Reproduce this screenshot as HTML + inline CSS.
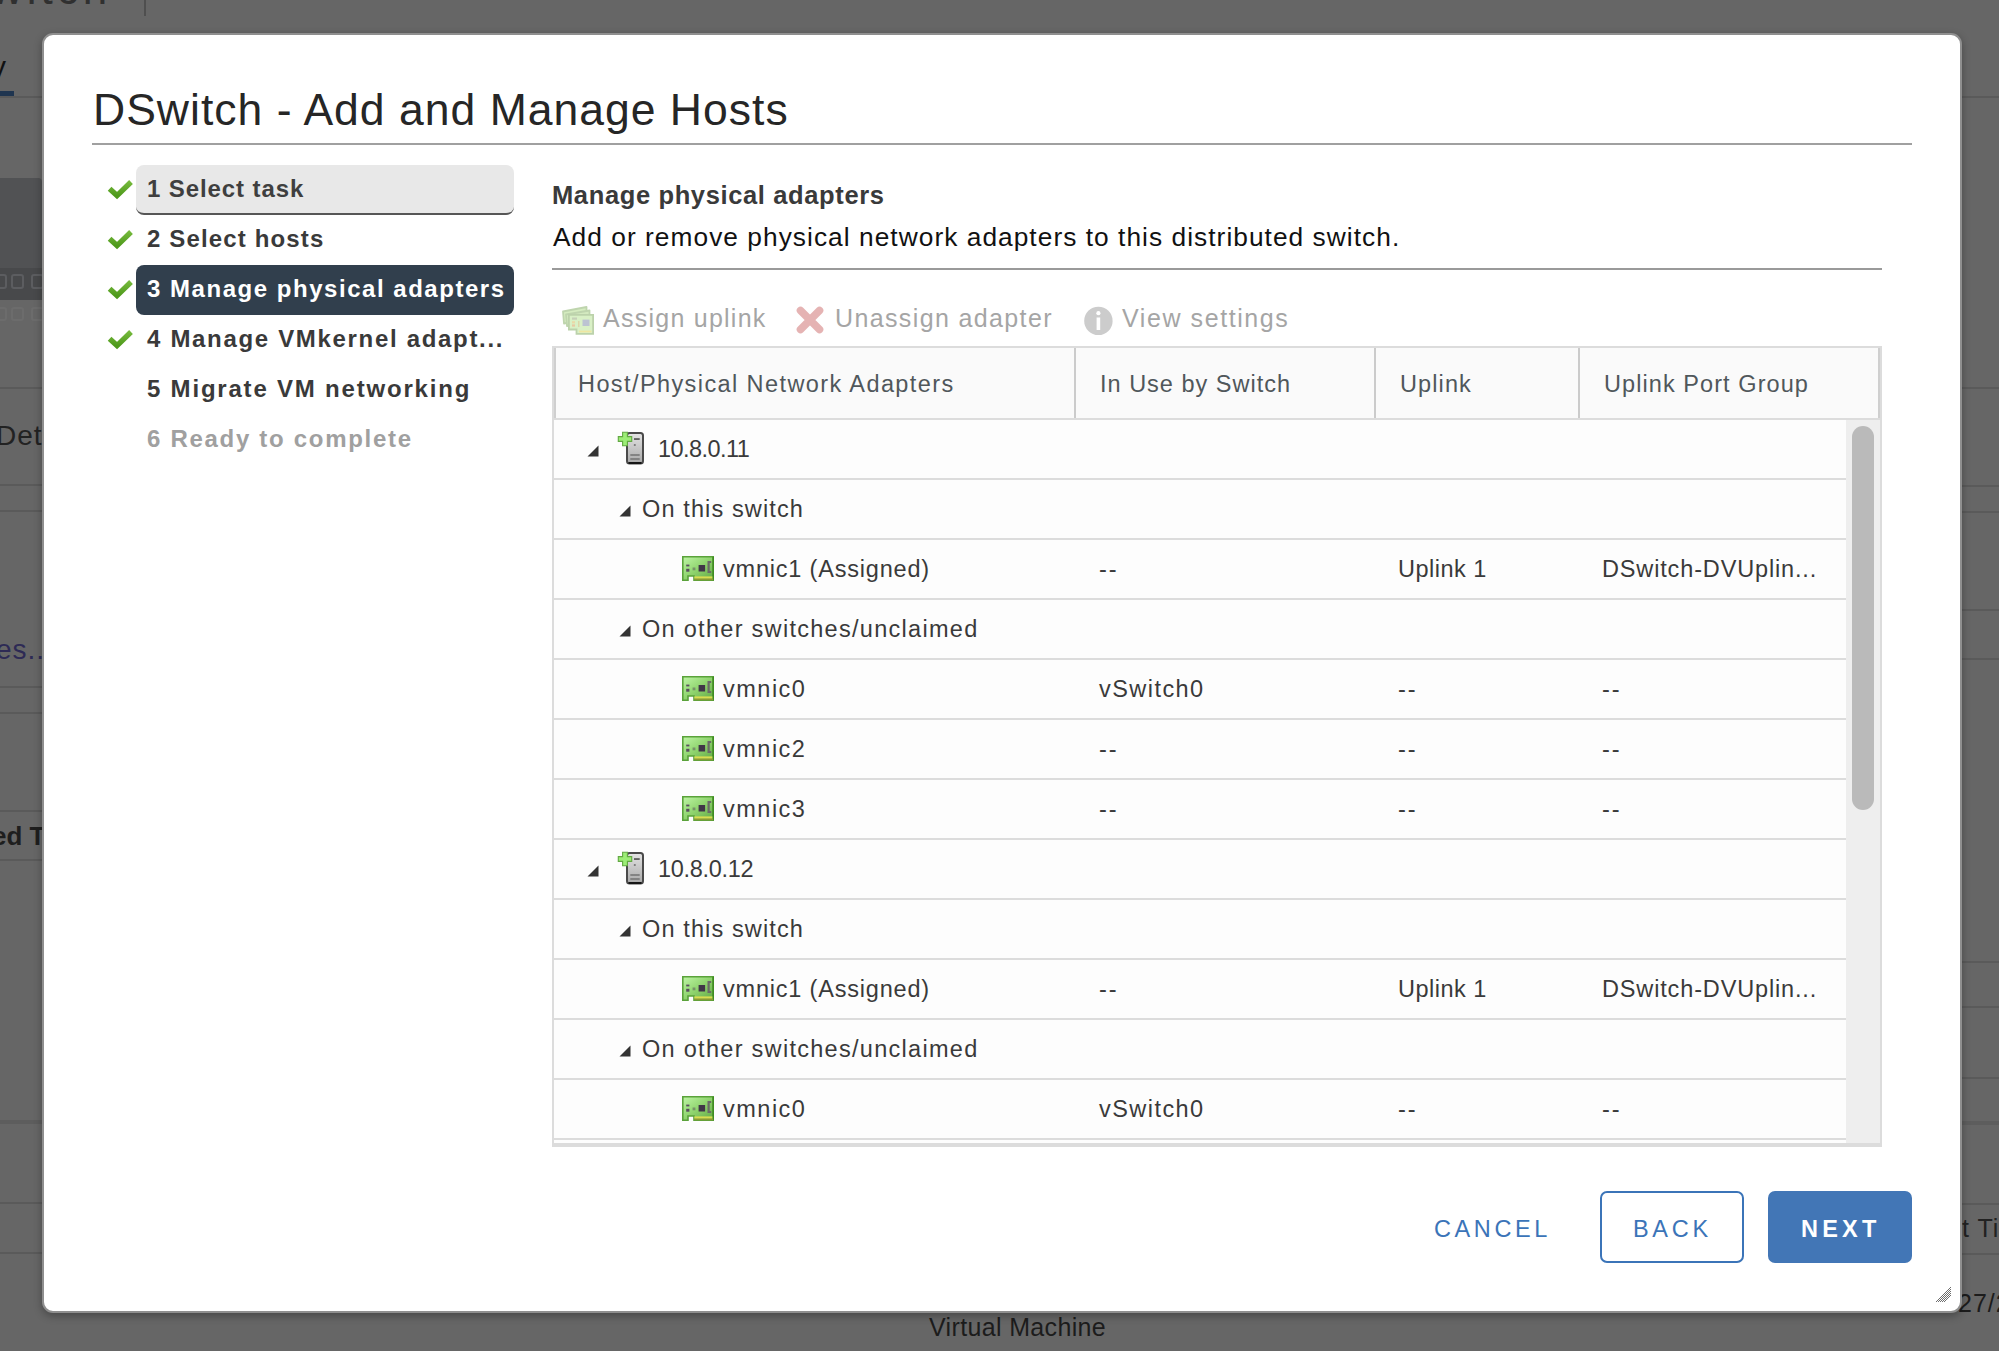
<!DOCTYPE html>
<html><head><meta charset="utf-8"><style>
html,body{margin:0;padding:0;}
body{width:1999px;height:1351px;overflow:hidden;background:#666;position:relative;font-family:"Liberation Sans",sans-serif;}
.a{position:absolute;}
.t{position:absolute;white-space:nowrap;line-height:1;}
.bgl{position:absolute;height:2px;background:#5a5a5a;}
#dlg{position:absolute;box-sizing:border-box;left:42px;top:33px;width:1920px;height:1280px;background:#fff;border:2px solid #8f8f8f;border-radius:11px;box-shadow:0 3px 8px rgba(0,0,0,0.3);}
.nav{font-weight:bold;color:#333;}
.cell{color:#3a3a3a;}
.hdr{color:#50575b;}
.tb{color:#a5a5a5;}
.rl{position:absolute;left:554px;width:1292px;height:2px;background:#dcdcdc;}
.csep{position:absolute;top:348px;width:2px;height:70px;background:#cbcbcb;}
</style></head><body>
<div class="t " style="left:-9.0px;top:-33.2px;font-size:44px;color:#303030;letter-spacing:4px;">witch</div>
<div class="a" style="left:144px;top:0;width:2px;height:16px;background:#4f4f4f;"></div>
<div class="t " style="left:-9.0px;top:51.6px;font-size:30px;color:#111;">y</div>
<div class="a" style="left:0;top:91px;width:14px;height:5px;background:#1f3550;"></div>
<div class="bgl" style="left:0;top:96px;width:42px;"></div>
<div class="bgl" style="left:0;top:387px;width:42px;"></div>
<div class="bgl" style="left:0;top:484px;width:42px;"></div>
<div class="bgl" style="left:0;top:510px;width:42px;"></div>
<div class="bgl" style="left:0;top:686px;width:42px;"></div>
<div class="bgl" style="left:0;top:712px;width:42px;"></div>
<div class="bgl" style="left:0;top:810px;width:42px;"></div>
<div class="bgl" style="left:0;top:859px;width:42px;"></div>
<div class="bgl" style="left:0;top:1202px;width:42px;"></div>
<div class="bgl" style="left:0;top:1252px;width:42px;"></div>
<div class="bgl" style="left:1962px;top:96px;width:40px;"></div>
<div class="bgl" style="left:1962px;top:387px;width:40px;"></div>
<div class="bgl" style="left:1962px;top:485px;width:40px;"></div>
<div class="bgl" style="left:1962px;top:511px;width:40px;"></div>
<div class="bgl" style="left:1962px;top:609px;width:40px;"></div>
<div class="bgl" style="left:1962px;top:658px;width:40px;"></div>
<div class="bgl" style="left:1962px;top:961px;width:40px;"></div>
<div class="bgl" style="left:1962px;top:1006px;width:40px;"></div>
<div class="bgl" style="left:1962px;top:1077px;width:40px;"></div>
<div class="bgl" style="left:1962px;top:1203px;width:40px;"></div>
<div class="bgl" style="left:1962px;top:1253px;width:40px;"></div>
<div class="a" style="left:0;top:178px;width:42px;height:90px;background:#515254;border-radius:0 4px 0 0;"></div>
<div class="a" style="left:0;top:268px;width:42px;height:32px;background:#48494b;"></div>
<div class="a" style="box-sizing:border-box;left:-6px;top:274px;width:13px;height:15px;border:2px solid #5c5d60;border-radius:3px;"></div>
<div class="a" style="box-sizing:border-box;left:-6px;top:307px;width:13px;height:14px;border:2px solid #6c6c6c;border-radius:3px;"></div>
<div class="a" style="box-sizing:border-box;left:11px;top:274px;width:13px;height:15px;border:2px solid #5c5d60;border-radius:3px;"></div>
<div class="a" style="box-sizing:border-box;left:11px;top:307px;width:13px;height:14px;border:2px solid #6c6c6c;border-radius:3px;"></div>
<div class="a" style="box-sizing:border-box;left:31px;top:274px;width:13px;height:15px;border:2px solid #5c5d60;border-radius:3px;"></div>
<div class="a" style="box-sizing:border-box;left:31px;top:307px;width:13px;height:14px;border:2px solid #6c6c6c;border-radius:3px;"></div>
<div class="t " style="left:-4.0px;top:422.3px;font-size:28px;color:#222;letter-spacing:1px;">Det</div>
<div class="t " style="left:-4.0px;top:636.3px;font-size:28px;color:#2d2a55;letter-spacing:1px;">es...</div>
<div class="t " style="left:-8.0px;top:823.0px;font-size:26px;color:#1e1e1e;font-weight:bold;letter-spacing:0px;">ed Ta</div>
<div class="t " style="left:929.0px;top:1314.8px;font-size:25px;color:#1c1c1c;letter-spacing:0.35px;">Virtual Machine</div>
<div class="t " style="left:1962.0px;top:1215.8px;font-size:25px;color:#222;letter-spacing:1px;">t Ti</div>
<div class="t " style="left:1958.0px;top:1290.8px;font-size:25px;color:#1c1c1c;letter-spacing:1px;">27/2</div>
<div class="a" style="left:1962px;top:1121px;width:40px;height:4px;background:#5d5d5d;"></div>
<div class="a" style="left:0;top:1120px;width:42px;height:4px;background:#5d5d5d;"></div>
<div id="dlg"></div>
<div class="t " style="left:93.0px;top:88.3px;font-size:44.5px;color:#262626;letter-spacing:1.01px;">DSwitch - Add and Manage Hosts</div>
<div class="a" style="left:92px;top:143px;width:1820px;height:2px;background:#a0a0a0;"></div>
<div class="a" style="box-sizing:border-box;left:136px;top:165px;width:378px;height:50px;background:#e8e8e8;border-bottom:2px solid #565656;border-radius:8px;"></div>
<div class="a" style="left:136px;top:265px;width:378px;height:50px;background:#313f4d;border-radius:8px;"></div>
<div class="t nav" style="left:147.0px;top:176.7px;font-size:24px;color:#3f3f3f;letter-spacing:0.9px;">1 Select task</div>
<svg class="a" style="left:104px;top:176px" width="32" height="28" viewBox="0 0 32 28"><defs><linearGradient id="ck0" x1="0" y1="0" x2="0" y2="1"><stop offset="0" stop-color="#74b83a"/><stop offset="1" stop-color="#4f9a1c"/></linearGradient></defs><path d="M5.6 12.8 L13 19.6 L27 6" fill="none" stroke="url(#ck0)" stroke-width="5.4" stroke-linecap="butt" stroke-linejoin="miter"/></svg>
<div class="t nav" style="left:147.0px;top:226.7px;font-size:24px;color:#3a3a3a;letter-spacing:1.15px;">2 Select hosts</div>
<svg class="a" style="left:104px;top:226px" width="32" height="28" viewBox="0 0 32 28"><defs><linearGradient id="ck1" x1="0" y1="0" x2="0" y2="1"><stop offset="0" stop-color="#74b83a"/><stop offset="1" stop-color="#4f9a1c"/></linearGradient></defs><path d="M5.6 12.8 L13 19.6 L27 6" fill="none" stroke="url(#ck1)" stroke-width="5.4" stroke-linecap="butt" stroke-linejoin="miter"/></svg>
<div class="t nav" style="left:147.0px;top:276.7px;font-size:24px;color:#fff;letter-spacing:1.53px;">3 Manage physical adapters</div>
<svg class="a" style="left:104px;top:276px" width="32" height="28" viewBox="0 0 32 28"><defs><linearGradient id="ck2" x1="0" y1="0" x2="0" y2="1"><stop offset="0" stop-color="#74b83a"/><stop offset="1" stop-color="#4f9a1c"/></linearGradient></defs><path d="M5.6 12.8 L13 19.6 L27 6" fill="none" stroke="url(#ck2)" stroke-width="5.4" stroke-linecap="butt" stroke-linejoin="miter"/></svg>
<div class="t nav" style="left:147.0px;top:326.7px;font-size:24px;color:#3a3a3a;letter-spacing:1.68px;">4 Manage VMkernel adapt...</div>
<svg class="a" style="left:104px;top:326px" width="32" height="28" viewBox="0 0 32 28"><defs><linearGradient id="ck3" x1="0" y1="0" x2="0" y2="1"><stop offset="0" stop-color="#74b83a"/><stop offset="1" stop-color="#4f9a1c"/></linearGradient></defs><path d="M5.6 12.8 L13 19.6 L27 6" fill="none" stroke="url(#ck3)" stroke-width="5.4" stroke-linecap="butt" stroke-linejoin="miter"/></svg>
<div class="t nav" style="left:147.0px;top:376.7px;font-size:24px;color:#3a3a3a;letter-spacing:1.8px;">5 Migrate VM networking</div>
<div class="t nav" style="left:147.0px;top:426.7px;font-size:24px;color:#a0a0a0;letter-spacing:1.7px;">6 Ready to complete</div>
<div class="t " style="left:552.0px;top:182.8px;font-size:25.5px;color:#3a3a3a;font-weight:bold;letter-spacing:0.63px;">Manage physical adapters</div>
<div class="t " style="left:553.0px;top:223.7px;font-size:26.3px;color:#111;letter-spacing:1.04px;">Add or remove physical network adapters to this distributed switch.</div>
<div class="a" style="left:552px;top:268px;width:1330px;height:2px;background:#9a9a9a;"></div>
<div class="t tb" style="left:603.0px;top:305.8px;font-size:25px;letter-spacing:1.25px;">Assign uplink</div>
<div class="t tb" style="left:835.0px;top:305.8px;font-size:25px;letter-spacing:1.37px;">Unassign adapter</div>
<div class="t tb" style="left:1122.0px;top:305.8px;font-size:25px;letter-spacing:1.58px;">View settings</div>
<svg class="a" style="left:562px;top:306px" width="33" height="29" viewBox="0 0 33 29">
<path d="M1 5.5 L24.5 1 V13 L2 17.5 Z" fill="#d5ecc0" stroke="#bfd5ae" stroke-width="1.8" stroke-linejoin="round"/>
<path d="M4 8.5 L27.5 4.5 V15 L5 20 Z" fill="#d3e9bf" stroke="#bfd5ae" stroke-width="1.8" stroke-linejoin="round"/>
<path d="M6.9 8.9 H31.1 V27.8 H14.5 V23.5 H6.9 Z" fill="#d9f0c6" stroke="#bcd2ab" stroke-width="1.8"/>
<rect x="10" y="11.5" width="5" height="2.2" fill="#c6d0b8"/>
<rect x="10" y="15.2" width="3" height="2.2" fill="#ead9a6"/>
<rect x="10" y="18.4" width="3" height="2.2" fill="#e8c9a2"/>
<rect x="16" y="15" width="1.5" height="6" fill="#dcd6a8"/>
<rect x="20.5" y="13.6" width="7" height="6.4" fill="#bcc3d2"/>
<rect x="17" y="24.6" width="12.5" height="1.8" fill="#efe6a2"/>
</svg>
<svg class="a" style="left:795px;top:305px" width="30" height="30" viewBox="0 0 30 30">
<path d="M5.5 5.5 L24.5 24.5 M24.5 5.5 L5.5 24.5" stroke="#e5b3b3" stroke-width="7.6" stroke-linecap="round"/>
</svg>
<svg class="a" style="left:1084px;top:306px" width="30" height="30" viewBox="0 0 30 30">
<circle cx="14.4" cy="14.9" r="14.2" fill="#cccccc"/>
<circle cx="14.4" cy="7.2" r="2.1" fill="#fff"/>
<rect x="12.6" y="11.5" width="3.6" height="12.5" fill="#fff"/>
</svg>
<div class="a" style="box-sizing:border-box;left:552px;top:346px;width:1330px;height:801px;border:2px solid #dcdcdc;border-bottom-width:4px;background:#fdfdfd;"></div>
<div class="a" style="left:554px;top:348px;width:1326px;height:70px;background:#fafafa;"></div>
<div class="a" style="left:554px;top:348px;width:2px;height:70px;background:#cfcfcf;"></div>
<div class="a" style="left:1878px;top:348px;width:2px;height:70px;background:#cfcfcf;"></div>
<div class="a" style="left:554px;top:418px;width:1326px;height:2px;background:#dcdcdc;"></div>
<div class="csep" style="left:1074px;"></div>
<div class="csep" style="left:1374px;"></div>
<div class="csep" style="left:1578px;"></div>
<div class="t hdr" style="left:578.0px;top:373.1px;font-size:23.5px;letter-spacing:1.41px;">Host/Physical Network Adapters</div>
<div class="t hdr" style="left:1100.0px;top:373.1px;font-size:23.5px;letter-spacing:1.0px;">In Use by Switch</div>
<div class="t hdr" style="left:1400.0px;top:373.1px;font-size:23.5px;letter-spacing:1.1px;">Uplink</div>
<div class="t hdr" style="left:1604.0px;top:373.1px;font-size:23.5px;letter-spacing:1.07px;">Uplink Port Group</div>
<div class="a" style="left:1846px;top:420px;width:34px;height:723px;background:#eeeeee;"></div>
<div class="a" style="left:1852px;top:426px;width:22px;height:384px;background:#bababa;border-radius:11px;"></div>
<div class="rl" style="top:478px;"></div>
<svg class="a" style="left:587px;top:445px" width="12" height="12" viewBox="0 0 12 12"><path d="M0.5 11.5 H11.5 V0.5 Z" fill="#333"/></svg>
<svg class="a" style="left:617px;top:431px" width="30" height="35" viewBox="0 0 30 35">
<defs><linearGradient id="sg0" x1="0" y1="0" x2="0" y2="1"><stop offset="0" stop-color="#e4e4e4"/><stop offset="1" stop-color="#a8a8a8"/></linearGradient></defs>
<rect x="10" y="2" width="16" height="30.5" rx="2.5" fill="url(#sg0)" stroke="#4a4a4a" stroke-width="2"/>
<rect x="11.5" y="31" width="13" height="2" fill="#151515"/>
<rect x="17" y="7.2" width="5.7" height="1.7" fill="#555"/>
<circle cx="17.8" cy="14" r="1.1" fill="#777"/>
<rect x="13.3" y="23.2" width="9.4" height="1.6" fill="#777"/>
<rect x="13.3" y="27.2" width="9.4" height="1.6" fill="#777"/>
<path d="M5.6 1.3 H10.4 V5.6 H14.7 V10.4 H10.4 V14.7 H5.6 V10.4 H1.3 V5.6 H5.6 Z" fill="#9ced76" stroke="#62a842" stroke-width="1.1"/>
</svg>
<div class="t cell" style="left:658.0px;top:437.6px;font-size:23.5px;letter-spacing:-0.57px;">10.8.0.11</div>
<div class="rl" style="top:538px;"></div>
<svg class="a" style="left:619px;top:505px" width="12" height="12" viewBox="0 0 12 12"><path d="M0.5 11.5 H11.5 V0.5 Z" fill="#333"/></svg>
<div class="t cell" style="left:642.0px;top:497.6px;font-size:23.5px;letter-spacing:1.12px;">On this switch</div>
<div class="rl" style="top:598px;"></div>
<svg class="a" style="left:682px;top:555.7px" width="32" height="25" viewBox="0 0 32 25">
<defs><linearGradient id="ng2" x1="0" y1="0" x2="1" y2="1"><stop offset="0" stop-color="#bff5a6"/><stop offset="0.5" stop-color="#8fd46e"/><stop offset="1" stop-color="#62a844"/></linearGradient></defs>
<path d="M0.8 0.8 H31.2 V24.2 H12 V20 H6 V24.2 H0.8 Z" fill="url(#ng2)" stroke="#5aa23a" stroke-width="1.6"/>
<path d="M31.2 0.8 V24.2" stroke="#3f8c20" stroke-width="1.6"/>
<rect x="12.3" y="20.4" width="18.1" height="2.3" fill="#d8dc50"/>
<rect x="12.3" y="22.6" width="18.9" height="1.6" fill="#8d9a35"/>
<rect x="4.2" y="8.6" width="3.2" height="1.8" fill="#5a4f5f"/>
<rect x="4.2" y="12.8" width="3.2" height="2.9" fill="#5a4f5f"/>
<rect x="10.6" y="11.5" width="2.8" height="2.8" fill="#6f8066" opacity="0.8"/>
<rect x="16.6" y="9" width="6.5" height="6.5" fill="#403747"/>
<path d="M29.2 6 H26.6 V16 H29.2" fill="none" stroke="#6a6b66" stroke-width="2.2"/>
</svg>
<div class="t cell" style="left:723.0px;top:557.6px;font-size:23.5px;letter-spacing:0.8px;">vmnic1 (Assigned)</div>
<div class="t cell" style="left:1099.0px;top:557.6px;font-size:23.5px;letter-spacing:2.0px;">--</div>
<div class="t cell" style="left:1398.0px;top:557.6px;font-size:23.5px;letter-spacing:0.5px;">Uplink 1</div>
<div class="t cell" style="left:1602.0px;top:557.6px;font-size:23.5px;letter-spacing:0.85px;">DSwitch-DVUplin...</div>
<div class="rl" style="top:658px;"></div>
<svg class="a" style="left:619px;top:625px" width="12" height="12" viewBox="0 0 12 12"><path d="M0.5 11.5 H11.5 V0.5 Z" fill="#333"/></svg>
<div class="t cell" style="left:642.0px;top:617.6px;font-size:23.5px;letter-spacing:1.29px;">On other switches/unclaimed</div>
<div class="rl" style="top:718px;"></div>
<svg class="a" style="left:682px;top:675.7px" width="32" height="25" viewBox="0 0 32 25">
<defs><linearGradient id="ng4" x1="0" y1="0" x2="1" y2="1"><stop offset="0" stop-color="#bff5a6"/><stop offset="0.5" stop-color="#8fd46e"/><stop offset="1" stop-color="#62a844"/></linearGradient></defs>
<path d="M0.8 0.8 H31.2 V24.2 H12 V20 H6 V24.2 H0.8 Z" fill="url(#ng4)" stroke="#5aa23a" stroke-width="1.6"/>
<path d="M31.2 0.8 V24.2" stroke="#3f8c20" stroke-width="1.6"/>
<rect x="12.3" y="20.4" width="18.1" height="2.3" fill="#d8dc50"/>
<rect x="12.3" y="22.6" width="18.9" height="1.6" fill="#8d9a35"/>
<rect x="4.2" y="8.6" width="3.2" height="1.8" fill="#5a4f5f"/>
<rect x="4.2" y="12.8" width="3.2" height="2.9" fill="#5a4f5f"/>
<rect x="10.6" y="11.5" width="2.8" height="2.8" fill="#6f8066" opacity="0.8"/>
<rect x="16.6" y="9" width="6.5" height="6.5" fill="#403747"/>
<path d="M29.2 6 H26.6 V16 H29.2" fill="none" stroke="#6a6b66" stroke-width="2.2"/>
</svg>
<div class="t cell" style="left:723.0px;top:677.6px;font-size:23.5px;letter-spacing:1.5px;">vmnic0</div>
<div class="t cell" style="left:1099.0px;top:677.6px;font-size:23.5px;letter-spacing:1.45px;">vSwitch0</div>
<div class="t cell" style="left:1398.0px;top:677.6px;font-size:23.5px;letter-spacing:2.0px;">--</div>
<div class="t cell" style="left:1602.0px;top:677.6px;font-size:23.5px;letter-spacing:2.0px;">--</div>
<div class="rl" style="top:778px;"></div>
<svg class="a" style="left:682px;top:735.7px" width="32" height="25" viewBox="0 0 32 25">
<defs><linearGradient id="ng5" x1="0" y1="0" x2="1" y2="1"><stop offset="0" stop-color="#bff5a6"/><stop offset="0.5" stop-color="#8fd46e"/><stop offset="1" stop-color="#62a844"/></linearGradient></defs>
<path d="M0.8 0.8 H31.2 V24.2 H12 V20 H6 V24.2 H0.8 Z" fill="url(#ng5)" stroke="#5aa23a" stroke-width="1.6"/>
<path d="M31.2 0.8 V24.2" stroke="#3f8c20" stroke-width="1.6"/>
<rect x="12.3" y="20.4" width="18.1" height="2.3" fill="#d8dc50"/>
<rect x="12.3" y="22.6" width="18.9" height="1.6" fill="#8d9a35"/>
<rect x="4.2" y="8.6" width="3.2" height="1.8" fill="#5a4f5f"/>
<rect x="4.2" y="12.8" width="3.2" height="2.9" fill="#5a4f5f"/>
<rect x="10.6" y="11.5" width="2.8" height="2.8" fill="#6f8066" opacity="0.8"/>
<rect x="16.6" y="9" width="6.5" height="6.5" fill="#403747"/>
<path d="M29.2 6 H26.6 V16 H29.2" fill="none" stroke="#6a6b66" stroke-width="2.2"/>
</svg>
<div class="t cell" style="left:723.0px;top:737.6px;font-size:23.5px;letter-spacing:1.5px;">vmnic2</div>
<div class="t cell" style="left:1099.0px;top:737.6px;font-size:23.5px;letter-spacing:2.0px;">--</div>
<div class="t cell" style="left:1398.0px;top:737.6px;font-size:23.5px;letter-spacing:2.0px;">--</div>
<div class="t cell" style="left:1602.0px;top:737.6px;font-size:23.5px;letter-spacing:2.0px;">--</div>
<div class="rl" style="top:838px;"></div>
<svg class="a" style="left:682px;top:795.7px" width="32" height="25" viewBox="0 0 32 25">
<defs><linearGradient id="ng6" x1="0" y1="0" x2="1" y2="1"><stop offset="0" stop-color="#bff5a6"/><stop offset="0.5" stop-color="#8fd46e"/><stop offset="1" stop-color="#62a844"/></linearGradient></defs>
<path d="M0.8 0.8 H31.2 V24.2 H12 V20 H6 V24.2 H0.8 Z" fill="url(#ng6)" stroke="#5aa23a" stroke-width="1.6"/>
<path d="M31.2 0.8 V24.2" stroke="#3f8c20" stroke-width="1.6"/>
<rect x="12.3" y="20.4" width="18.1" height="2.3" fill="#d8dc50"/>
<rect x="12.3" y="22.6" width="18.9" height="1.6" fill="#8d9a35"/>
<rect x="4.2" y="8.6" width="3.2" height="1.8" fill="#5a4f5f"/>
<rect x="4.2" y="12.8" width="3.2" height="2.9" fill="#5a4f5f"/>
<rect x="10.6" y="11.5" width="2.8" height="2.8" fill="#6f8066" opacity="0.8"/>
<rect x="16.6" y="9" width="6.5" height="6.5" fill="#403747"/>
<path d="M29.2 6 H26.6 V16 H29.2" fill="none" stroke="#6a6b66" stroke-width="2.2"/>
</svg>
<div class="t cell" style="left:723.0px;top:797.6px;font-size:23.5px;letter-spacing:1.5px;">vmnic3</div>
<div class="t cell" style="left:1099.0px;top:797.6px;font-size:23.5px;letter-spacing:2.0px;">--</div>
<div class="t cell" style="left:1398.0px;top:797.6px;font-size:23.5px;letter-spacing:2.0px;">--</div>
<div class="t cell" style="left:1602.0px;top:797.6px;font-size:23.5px;letter-spacing:2.0px;">--</div>
<div class="rl" style="top:898px;"></div>
<svg class="a" style="left:587px;top:865px" width="12" height="12" viewBox="0 0 12 12"><path d="M0.5 11.5 H11.5 V0.5 Z" fill="#333"/></svg>
<svg class="a" style="left:617px;top:851px" width="30" height="35" viewBox="0 0 30 35">
<defs><linearGradient id="sg7" x1="0" y1="0" x2="0" y2="1"><stop offset="0" stop-color="#e4e4e4"/><stop offset="1" stop-color="#a8a8a8"/></linearGradient></defs>
<rect x="10" y="2" width="16" height="30.5" rx="2.5" fill="url(#sg7)" stroke="#4a4a4a" stroke-width="2"/>
<rect x="11.5" y="31" width="13" height="2" fill="#151515"/>
<rect x="17" y="7.2" width="5.7" height="1.7" fill="#555"/>
<circle cx="17.8" cy="14" r="1.1" fill="#777"/>
<rect x="13.3" y="23.2" width="9.4" height="1.6" fill="#777"/>
<rect x="13.3" y="27.2" width="9.4" height="1.6" fill="#777"/>
<path d="M5.6 1.3 H10.4 V5.6 H14.7 V10.4 H10.4 V14.7 H5.6 V10.4 H1.3 V5.6 H5.6 Z" fill="#9ced76" stroke="#62a842" stroke-width="1.1"/>
</svg>
<div class="t cell" style="left:658.0px;top:857.6px;font-size:23.5px;letter-spacing:-0.3px;">10.8.0.12</div>
<div class="rl" style="top:958px;"></div>
<svg class="a" style="left:619px;top:925px" width="12" height="12" viewBox="0 0 12 12"><path d="M0.5 11.5 H11.5 V0.5 Z" fill="#333"/></svg>
<div class="t cell" style="left:642.0px;top:917.6px;font-size:23.5px;letter-spacing:1.12px;">On this switch</div>
<div class="rl" style="top:1018px;"></div>
<svg class="a" style="left:682px;top:975.7px" width="32" height="25" viewBox="0 0 32 25">
<defs><linearGradient id="ng9" x1="0" y1="0" x2="1" y2="1"><stop offset="0" stop-color="#bff5a6"/><stop offset="0.5" stop-color="#8fd46e"/><stop offset="1" stop-color="#62a844"/></linearGradient></defs>
<path d="M0.8 0.8 H31.2 V24.2 H12 V20 H6 V24.2 H0.8 Z" fill="url(#ng9)" stroke="#5aa23a" stroke-width="1.6"/>
<path d="M31.2 0.8 V24.2" stroke="#3f8c20" stroke-width="1.6"/>
<rect x="12.3" y="20.4" width="18.1" height="2.3" fill="#d8dc50"/>
<rect x="12.3" y="22.6" width="18.9" height="1.6" fill="#8d9a35"/>
<rect x="4.2" y="8.6" width="3.2" height="1.8" fill="#5a4f5f"/>
<rect x="4.2" y="12.8" width="3.2" height="2.9" fill="#5a4f5f"/>
<rect x="10.6" y="11.5" width="2.8" height="2.8" fill="#6f8066" opacity="0.8"/>
<rect x="16.6" y="9" width="6.5" height="6.5" fill="#403747"/>
<path d="M29.2 6 H26.6 V16 H29.2" fill="none" stroke="#6a6b66" stroke-width="2.2"/>
</svg>
<div class="t cell" style="left:723.0px;top:977.6px;font-size:23.5px;letter-spacing:0.8px;">vmnic1 (Assigned)</div>
<div class="t cell" style="left:1099.0px;top:977.6px;font-size:23.5px;letter-spacing:2.0px;">--</div>
<div class="t cell" style="left:1398.0px;top:977.6px;font-size:23.5px;letter-spacing:0.5px;">Uplink 1</div>
<div class="t cell" style="left:1602.0px;top:977.6px;font-size:23.5px;letter-spacing:0.85px;">DSwitch-DVUplin...</div>
<div class="rl" style="top:1078px;"></div>
<svg class="a" style="left:619px;top:1045px" width="12" height="12" viewBox="0 0 12 12"><path d="M0.5 11.5 H11.5 V0.5 Z" fill="#333"/></svg>
<div class="t cell" style="left:642.0px;top:1037.6px;font-size:23.5px;letter-spacing:1.29px;">On other switches/unclaimed</div>
<div class="rl" style="top:1138px;"></div>
<svg class="a" style="left:682px;top:1095.7px" width="32" height="25" viewBox="0 0 32 25">
<defs><linearGradient id="ng11" x1="0" y1="0" x2="1" y2="1"><stop offset="0" stop-color="#bff5a6"/><stop offset="0.5" stop-color="#8fd46e"/><stop offset="1" stop-color="#62a844"/></linearGradient></defs>
<path d="M0.8 0.8 H31.2 V24.2 H12 V20 H6 V24.2 H0.8 Z" fill="url(#ng11)" stroke="#5aa23a" stroke-width="1.6"/>
<path d="M31.2 0.8 V24.2" stroke="#3f8c20" stroke-width="1.6"/>
<rect x="12.3" y="20.4" width="18.1" height="2.3" fill="#d8dc50"/>
<rect x="12.3" y="22.6" width="18.9" height="1.6" fill="#8d9a35"/>
<rect x="4.2" y="8.6" width="3.2" height="1.8" fill="#5a4f5f"/>
<rect x="4.2" y="12.8" width="3.2" height="2.9" fill="#5a4f5f"/>
<rect x="10.6" y="11.5" width="2.8" height="2.8" fill="#6f8066" opacity="0.8"/>
<rect x="16.6" y="9" width="6.5" height="6.5" fill="#403747"/>
<path d="M29.2 6 H26.6 V16 H29.2" fill="none" stroke="#6a6b66" stroke-width="2.2"/>
</svg>
<div class="t cell" style="left:723.0px;top:1097.6px;font-size:23.5px;letter-spacing:1.5px;">vmnic0</div>
<div class="t cell" style="left:1099.0px;top:1097.6px;font-size:23.5px;letter-spacing:1.45px;">vSwitch0</div>
<div class="t cell" style="left:1398.0px;top:1097.6px;font-size:23.5px;letter-spacing:2.0px;">--</div>
<div class="t cell" style="left:1602.0px;top:1097.6px;font-size:23.5px;letter-spacing:2.0px;">--</div>
<div class="t " style="left:1434.0px;top:1218.1px;font-size:23.5px;color:#3b74b8;letter-spacing:3.6px;">CANCEL</div>
<div class="a" style="box-sizing:border-box;left:1600px;top:1191px;width:144px;height:72px;border:2px solid #3b74b8;border-radius:7px;"></div>
<div class="t " style="left:1633.0px;top:1218.1px;font-size:23.5px;color:#3b74b8;letter-spacing:3.7px;">BACK</div>
<div class="a" style="left:1768px;top:1191px;width:144px;height:72px;background:#4276b6;border-radius:7px;"></div>
<div class="t " style="left:1801.0px;top:1218.1px;font-size:23.5px;color:#fff;font-weight:bold;letter-spacing:4.2px;">NEXT</div>
<svg class="a" style="left:1936px;top:1287px" width="15" height="15" viewBox="0 0 15 15"><rect x="0" y="14" width="1" height="1" fill="#6e6e6e"/><rect x="1" y="13" width="1" height="1" fill="#6e6e6e"/><rect x="2" y="12" width="1" height="1" fill="#6e6e6e"/><rect x="2" y="14" width="1" height="1" fill="#6e6e6e"/><rect x="3" y="11" width="1" height="1" fill="#6e6e6e"/><rect x="3" y="13" width="1" height="1" fill="#6e6e6e"/><rect x="4" y="10" width="1" height="1" fill="#6e6e6e"/><rect x="4" y="12" width="1" height="1" fill="#6e6e6e"/><rect x="4" y="14" width="1" height="1" fill="#6e6e6e"/><rect x="5" y="9" width="1" height="1" fill="#6e6e6e"/><rect x="5" y="11" width="1" height="1" fill="#6e6e6e"/><rect x="5" y="13" width="1" height="1" fill="#6e6e6e"/><rect x="6" y="8" width="1" height="1" fill="#6e6e6e"/><rect x="6" y="10" width="1" height="1" fill="#6e6e6e"/><rect x="6" y="12" width="1" height="1" fill="#6e6e6e"/><rect x="6" y="14" width="1" height="1" fill="#6e6e6e"/><rect x="7" y="7" width="1" height="1" fill="#6e6e6e"/><rect x="7" y="9" width="1" height="1" fill="#6e6e6e"/><rect x="7" y="11" width="1" height="1" fill="#6e6e6e"/><rect x="7" y="13" width="1" height="1" fill="#6e6e6e"/><rect x="8" y="6" width="1" height="1" fill="#6e6e6e"/><rect x="8" y="8" width="1" height="1" fill="#6e6e6e"/><rect x="8" y="10" width="1" height="1" fill="#6e6e6e"/><rect x="8" y="12" width="1" height="1" fill="#6e6e6e"/><rect x="8" y="14" width="1" height="1" fill="#6e6e6e"/><rect x="9" y="5" width="1" height="1" fill="#6e6e6e"/><rect x="9" y="7" width="1" height="1" fill="#6e6e6e"/><rect x="9" y="9" width="1" height="1" fill="#6e6e6e"/><rect x="9" y="11" width="1" height="1" fill="#6e6e6e"/><rect x="9" y="13" width="1" height="1" fill="#6e6e6e"/><rect x="10" y="4" width="1" height="1" fill="#6e6e6e"/><rect x="10" y="6" width="1" height="1" fill="#6e6e6e"/><rect x="10" y="8" width="1" height="1" fill="#6e6e6e"/><rect x="10" y="10" width="1" height="1" fill="#6e6e6e"/><rect x="10" y="12" width="1" height="1" fill="#6e6e6e"/><rect x="11" y="3" width="1" height="1" fill="#6e6e6e"/><rect x="11" y="5" width="1" height="1" fill="#6e6e6e"/><rect x="11" y="7" width="1" height="1" fill="#6e6e6e"/><rect x="11" y="9" width="1" height="1" fill="#6e6e6e"/><rect x="11" y="11" width="1" height="1" fill="#6e6e6e"/><rect x="12" y="2" width="1" height="1" fill="#6e6e6e"/><rect x="12" y="4" width="1" height="1" fill="#6e6e6e"/><rect x="12" y="6" width="1" height="1" fill="#6e6e6e"/><rect x="12" y="8" width="1" height="1" fill="#6e6e6e"/><rect x="12" y="10" width="1" height="1" fill="#6e6e6e"/><rect x="13" y="1" width="1" height="1" fill="#6e6e6e"/><rect x="13" y="3" width="1" height="1" fill="#6e6e6e"/><rect x="13" y="5" width="1" height="1" fill="#6e6e6e"/><rect x="13" y="7" width="1" height="1" fill="#6e6e6e"/><rect x="13" y="9" width="1" height="1" fill="#6e6e6e"/><rect x="14" y="0" width="1" height="1" fill="#6e6e6e"/><rect x="14" y="2" width="1" height="1" fill="#6e6e6e"/><rect x="14" y="4" width="1" height="1" fill="#6e6e6e"/><rect x="14" y="6" width="1" height="1" fill="#6e6e6e"/><rect x="14" y="8" width="1" height="1" fill="#6e6e6e"/></svg>
</body></html>
